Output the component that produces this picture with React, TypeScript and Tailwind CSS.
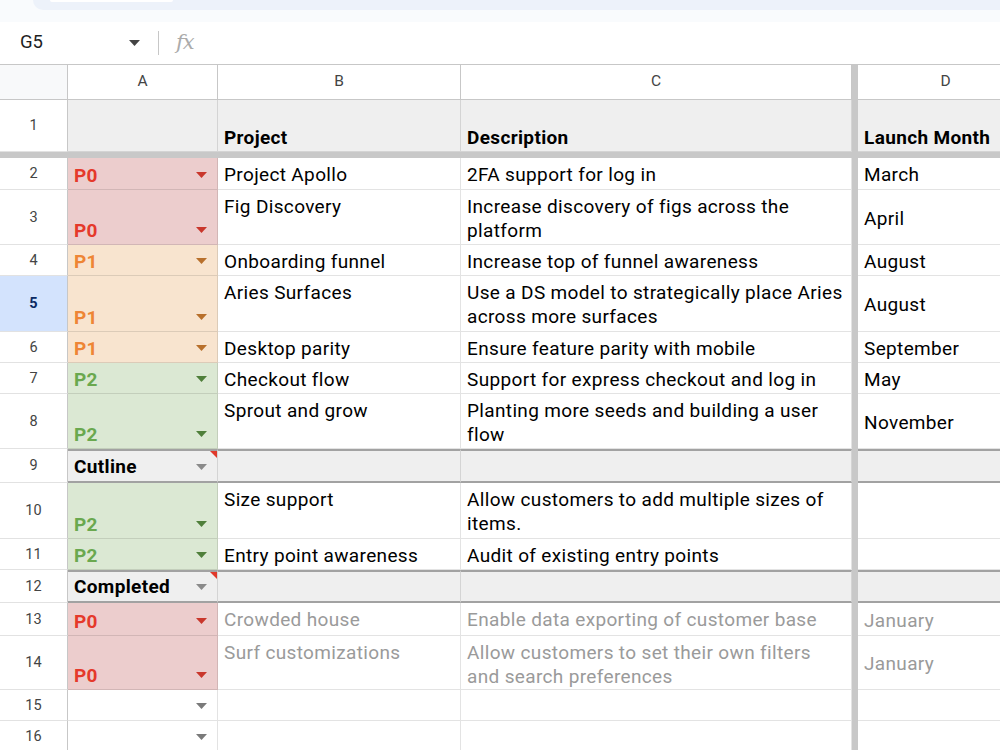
// 스프레드시트 로드맵 화면 (Google Sheets 스타일)

import React from 'react'

type Priority = 'P0' | 'P1' | 'P2'

interface Row {
	n: number
	h: string
	pri?: Priority
	b?: string[]
	c?: string[]
	d?: string
	section?: string
	muted?: boolean
	selected?: boolean
}

// ── 우선순위 칩 색상 ──────────────────────────────────────────

const PRI: Record<Priority, { bg: string; text: string; caret: string }> = {
	P0: { bg: 'bg-[#eccdcd]', text: 'text-[#e5392b]', caret: '#c9372c' },
	P1: { bg: 'bg-[#f8e4cf]', text: 'text-[#ee8535]', caret: '#b8702c' },
	P2: { bg: 'bg-[#dbe8d3]', text: 'text-[#6aa84f]', caret: '#4f7f3a' },
}

// ── 행 데이터 ─────────────────────────────────────────────────

const ROWS: Row[] = [
	{ n: 2, h: 'h-[32px]', pri: 'P0', b: ['Project Apollo'], c: ['2FA support for log in'], d: 'March' },
	{ n: 3, h: 'h-[55px]', pri: 'P0', b: ['Fig Discovery'], c: ['Increase discovery of figs across the', 'platform'], d: 'April' },
	{ n: 4, h: 'h-[31px]', pri: 'P1', b: ['Onboarding funnel'], c: ['Increase top of funnel awareness'], d: 'August' },
	{ n: 5, h: 'h-[56px]', pri: 'P1', b: ['Aries Surfaces'], c: ['Use a DS model to strategically place Aries', 'across more surfaces'], d: 'August', selected: true },
	{ n: 6, h: 'h-[31px]', pri: 'P1', b: ['Desktop parity'], c: ['Ensure feature parity with mobile'], d: 'September' },
	{ n: 7, h: 'h-[31px]', pri: 'P2', b: ['Checkout flow'], c: ['Support for express checkout and log in'], d: 'May' },
	{ n: 8, h: 'h-[55px]', pri: 'P2', b: ['Sprout and grow'], c: ['Planting more seeds and building a user', 'flow'], d: 'November' },
	{ n: 9, h: 'h-[34px]', section: 'Cutline' },
	{ n: 10, h: 'h-[56px]', pri: 'P2', b: ['Size support'], c: ['Allow customers to add multiple sizes of', 'items.'] },
	{ n: 11, h: 'h-[31px]', pri: 'P2', b: ['Entry point awareness'], c: ['Audit of existing entry points'] },
	{ n: 12, h: 'h-[33px]', section: 'Completed' },
	{ n: 13, h: 'h-[33px]', pri: 'P0', b: ['Crowded house'], c: ['Enable data exporting of customer base'], d: 'January', muted: true },
	{ n: 14, h: 'h-[54px]', pri: 'P0', b: ['Surf customizations'], c: ['Allow customers to set their own filters', 'and search preferences'], d: 'January', muted: true },
	{ n: 15, h: 'h-[31px]' },
	{ n: 16, h: 'h-[31px]' },
]

const CELL = 'border-r border-b border-[#0000001c]'
const SECTION = 'border-r border-r-[#0000001c] border-t-2 border-b-2 border-t-[#a2a2a2] border-b-[#a2a2a2] bg-[#efefef]'

function Caret({ color }: { color: string }) {
	return (
		<svg width="11" height="6" viewBox="0 0 11 6" className="shrink-0">
			<path d="M0 0h11L5.5 6z" fill={color} />
		</svg>
	)
}

function Lines({ lines }: { lines?: string[] }) {
	return (
		<>
			{(lines ?? []).map(l => (
				<div key={l} className="whitespace-nowrap">{l}</div>
			))}
		</>
	)
}

function RowHeader({ n, selected }: { n: number; selected?: boolean }) {
	return (
		<div
			className={`w-[68px] shrink-0 flex items-center justify-center pt-px border-r border-r-[#c7c7c7] border-b border-b-[#e2e2e2] text-[14.5px] tracking-normal ${
				selected ? 'bg-[#d3e3fd] text-[#0b2a63] font-bold' : 'bg-white text-[#444]'
			}`}
		>
			{n}
		</div>
	)
}

function Freeze() {
	return <div className="w-[6px] shrink-0 bg-[#c8c8c8]" />
}

function DataRow({ row }: { row: Row }) {
	if (row.section) {
		return (
			<div className={`flex ${row.h}`}>
				<RowHeader n={row.n} />
				<div className={`relative w-[150px] shrink-0 flex items-end justify-between pl-[6px] pr-[10px] pb-[2px] ${SECTION}`}>
					<span className="font-bold leading-[24px]">{row.section}</span>
					<span className="mb-[9px]"><Caret color="#8a8a8a" /></span>
					<svg width="7" height="7" viewBox="0 0 7 7" className="absolute top-0 right-0">
						<path d="M0 0h7v7z" fill="#e0392b" />
					</svg>
				</div>
				<div className={`w-[243px] shrink-0 ${SECTION}`} />
				<div className={`w-[391px] shrink-0 ${SECTION}`} />
				<Freeze />
				<div className={`w-[176px] shrink-0 ${SECTION}`} />
			</div>
		)
	}

	const p = row.pri ? PRI[row.pri] : null
	const tone = row.muted ? 'text-[#9a9a9a]' : 'text-black'

	return (
		<div className={`flex ${row.h}`}>
			<RowHeader n={row.n} selected={row.selected} />
			<div className={`w-[150px] shrink-0 flex items-end justify-between pl-[6px] pr-[10px] pb-[1px] ${CELL} ${p ? p.bg : 'bg-white'}`}>
				<span className={`font-bold leading-[24px] ${p ? p.text : ''}`}>{row.pri}</span>
				<span className="mb-[10px]"><Caret color={p ? p.caret : '#7a7a7a'} /></span>
			</div>
			<div className={`w-[243px] shrink-0 px-[6px] pt-[5px] leading-[24px] overflow-hidden ${CELL} ${tone}`}>
				<Lines lines={row.b} />
			</div>
			<div className={`w-[391px] shrink-0 px-[6px] pt-[5px] leading-[24px] overflow-hidden ${CELL} ${tone}`}>
				<Lines lines={row.c} />
			</div>
			<Freeze />
			<div className={`w-[176px] shrink-0 flex items-center px-[6px] pt-[3px] leading-[24px] ${CELL} ${tone}`}>
				{row.d}
			</div>
		</div>
	)
}

export default function App() {
	return (
		<div className="w-[1000px] h-[750px] overflow-hidden bg-white font-[Roboto,'Liberation_Sans',sans-serif] text-[19px] tracking-[0.35px] text-black">
			{/* 상단 툴바 끝자락 */}
			<div className="h-[22px] bg-[#f9fbfd] pl-[33px]">
				<div className="h-[10px] bg-[#edf2fa] rounded-bl-[14px]">
					<div className="ml-[17px] w-[123px] h-[2px] bg-white rounded-b-[4px]" />
				</div>
			</div>

			{/* 수식 입력줄 */}
			<div className="h-[43px] flex items-center border-b border-[#c7c7c7] tracking-normal">
				<div className="w-[158px] flex items-center justify-between pl-[20px] pr-[18px]">
					<span className="text-[18.5px] text-[#1f1f1f]">G5</span>
					<Caret color="#444" />
				</div>
				<div className="w-px h-[24px] bg-[#c7c7c7]" />
				<span className="ml-[17px] text-[21px] italic text-[#ababab] font-['DejaVu_Serif',serif] tracking-[-1px]">fx</span>
			</div>

			{/* 열 머리글 */}
			<div className="flex h-[35px] text-[15.5px] text-[#444] tracking-normal">
				<div className="w-[68px] shrink-0 bg-[#f8f9fa] border-r border-b border-[#c7c7c7]" />
				<div className="w-[150px] shrink-0 flex items-center justify-center border-r border-b border-[#c7c7c7]">A</div>
				<div className="w-[243px] shrink-0 flex items-center justify-center border-r border-b border-[#c7c7c7]">B</div>
				<div className="w-[391px] shrink-0 flex items-center justify-center border-r border-b border-[#c7c7c7]">C</div>
				<Freeze />
				<div className="w-[176px] shrink-0 flex items-center justify-center border-r border-b border-[#c7c7c7]">D</div>
			</div>

			{/* 1행 — 제목 */}
			<div className="flex h-[52px]">
				<RowHeader n={1} />
				<div className={`w-[150px] shrink-0 bg-[#efefef] ${CELL}`} />
				<div className={`w-[243px] shrink-0 bg-[#efefef] flex items-end px-[6px] pb-[1px] font-bold leading-[24px] ${CELL}`}>Project</div>
				<div className={`w-[391px] shrink-0 bg-[#efefef] flex items-end px-[6px] pb-[1px] font-bold leading-[24px] ${CELL}`}>Description</div>
				<Freeze />
				<div className={`w-[176px] shrink-0 bg-[#efefef] flex items-end px-[6px] pb-[1px] font-bold leading-[24px] whitespace-nowrap ${CELL}`}>Launch Month</div>
			</div>
			<div className="h-[6px] bg-[#c8c8c8]" />

			{ROWS.map(r => (
				<DataRow key={r.n} row={r} />
			))}
		</div>
	)
}
